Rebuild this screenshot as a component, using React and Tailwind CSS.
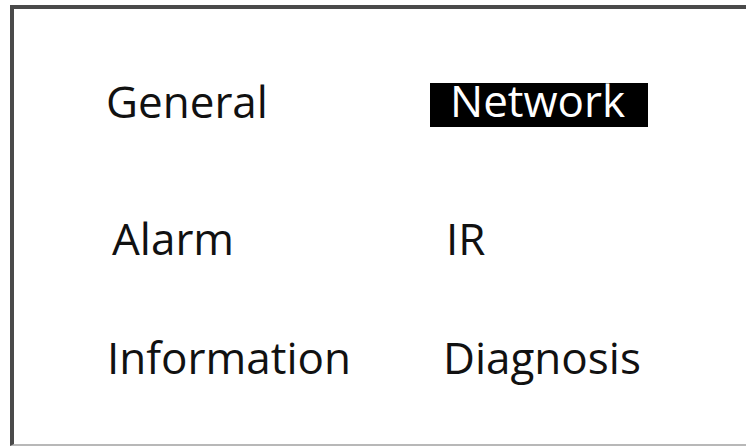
import React from 'react';

const items = [
  { left: 'General', right: 'Network', leftPad: 'ml-[92px]', rightPad: 'ml-0' },
  { left: 'Alarm', right: 'IR', leftPad: 'ml-[98px]', rightPad: 'ml-[16px]' },
  { left: 'Information', right: 'Diagnosis', leftPad: 'ml-[93px]', rightPad: 'ml-[13px]' },
];

function MenuLabel({ text, selected, pad }) {
  if (selected) {
    // highlighted entry: white text on a black bar
    return (
      <div className={`${pad} mt-[4px] w-[218px] bg-black pl-[20px] pb-[10px] leading-[34px] text-white`}>
        {text}
      </div>
    );
  }
  return <div className={`${pad} leading-[44px] text-[#111]`}>{text}</div>;
}

export default function App() {
  return (
    <div className="h-[446px] w-[746px] overflow-hidden bg-white" style={{ fontFamily: '"Open Sans", "Noto Sans", sans-serif' }}>
      <div className="ml-[10px] mt-[5px] h-[441px] w-[760px] border-t-4 border-l-4 border-b-2 border-t-[#4a4a4a] border-l-[#4a4a4a] border-b-[#b8b8b8] pt-[70px] text-[44px]">
        <div className="grid grid-cols-[416px_1fr]">
          <MenuLabel text={items[0].left} pad={items[0].leftPad} />
          <MenuLabel text={items[0].right} pad={items[0].rightPad} selected />
        </div>
        <div className="mt-[89px] grid grid-cols-[416px_1fr]">
          <MenuLabel text={items[1].left} pad={items[1].leftPad} />
          <MenuLabel text={items[1].right} pad={items[1].rightPad} />
        </div>
        <div className="mt-[75px] grid grid-cols-[416px_1fr]">
          <MenuLabel text={items[2].left} pad={items[2].leftPad} />
          <MenuLabel text={items[2].right} pad={items[2].rightPad} />
        </div>
      </div>
    </div>
  );
}
